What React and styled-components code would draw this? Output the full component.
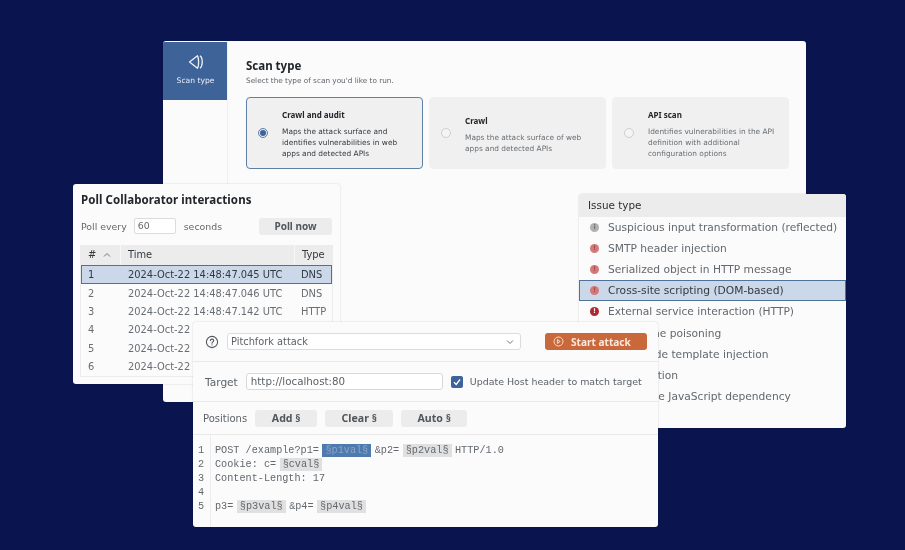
import React from "react";
import styled, { createGlobalStyle } from "styled-components";

const GlobalStyle = createGlobalStyle`
  html, body {
    margin: 0;
    padding: 0;
    background: #0a1550;
  }
  * {
    box-sizing: border-box;
  }
`;

const boldFont = `"Noto Sans", sans-serif`;

const Stage = styled.div`
  position: relative;
  width: 905px;
  height: 550px;
  overflow: hidden;
  background: #0a1550;
  font-family: "DejaVu Sans", sans-serif;
  color: #3c4248;
  filter: blur(0.3px);
`;

const Window = styled.div`
  position: absolute;
  left: ${(p) => p.$left}px;
  top: ${(p) => p.$top}px;
  width: ${(p) => p.$width}px;
  height: ${(p) => p.$height}px;
  background: #fbfbfb;
  border-radius: 3px;
  overflow: hidden;
  box-shadow: 0 0 2px rgba(0, 0, 0, 0.18);
`;

/* scan window */
const ScanWindow = styled(Window)`
  display: flex;
`;

const Sidebar = styled.div`
  width: 65px;
  flex: none;
  padding-top: 1px;
  border-right: 1px solid #f0f0f0;
`;

const SideTab = styled.div`
  height: 58px;
  background: #3d6399;
  color: #e8edf4;
  font-size: 7.6px;
  display: flex;
  flex-direction: column;
  align-items: center;
  padding-top: 12px;
  padding-left: 1px;
  gap: 6px;
`;

const ScanBody = styled.div`
  flex: 1;
  padding: 18px 18px 0 18px;
`;

const ScanTitle = styled.div`
  font-family: ${boldFont};
  font-size: 11.5px;
  font-weight: bold;
  line-height: 14px;
  color: #22262a;
`;

const ScanSub = styled.div`
  font-size: 7.3px;
  line-height: 10px;
  margin-top: 3px;
  color: #5f656b;
`;

const ScanCards = styled.div`
  display: flex;
  gap: 6px;
  margin-top: 11px;
`;

const ScanCard = styled.div`
  width: 177px;
  height: 72px;
  flex: none;
  display: flex;
  align-items: center;
  background: #f0f0f0;
  border-radius: 4px;
  border: ${(p) => (p.$active ? "1.5px solid #5d7fa8" : "1px solid #f0f0f0")};
  padding-left: 11px;
`;

const Radio = styled.span`
  width: 10px;
  height: 10px;
  flex: none;
  border-radius: 50%;
  border: 1px solid ${(p) => (p.$active ? "#5d7fa8" : "#cfcfcf")};
  background: ${(p) => (p.$active ? "#e6ecf4" : "#f4f4f4")};
  margin-right: 14px;
  display: flex;
  align-items: center;
  justify-content: center;
  &::after {
    content: "";
    display: ${(p) => (p.$active ? "block" : "none")};
    width: 6px;
    height: 6px;
    border-radius: 50%;
    background: #3d6399;
  }
`;

const CardCopy = styled.div`
  padding-top: 2px;
`;

const CardTitle = styled.div`
  font-family: ${boldFont};
  font-size: 8px;
  font-weight: bold;
  line-height: 11px;
  color: #22262a;
  margin-bottom: 6px;
`;

const CardText = styled.div`
  font-size: 7.4px;
  line-height: 11px;
  white-space: pre-line;
  color: ${(p) => (p.$active ? "#33383d" : "#686e74")};
`;

/* poll window */
const PollTitle = styled.div`
  font-family: ${boldFont};
  font-size: 11.5px;
  font-weight: bold;
  line-height: 14px;
  letter-spacing: 0.07px;
  color: #22262a;
  padding: 9px 8px 0;
`;

const PollRow = styled.div`
  display: flex;
  align-items: center;
  height: 18px;
  margin: 10px 8px 0;
  font-size: 9.4px;
  color: #62686e;
`;

const SmallInput = styled.div`
  width: 42px;
  height: 16px;
  margin: 0 8px 0 7px;
  padding-left: 3px;
  border: 1px solid #dcdcdc;
  border-radius: 2px;
  background: #fff;
  line-height: 14px;
`;

const PollButton = styled.div`
  margin-left: auto;
  width: 73px;
  height: 17px;
  background: #ececec;
  border-radius: 3px;
  font-family: ${boldFont};
  font-size: 10px;
  font-weight: bold;
  text-align: center;
  line-height: 17px;
  color: #50565c;
`;

const Table = styled.div`
  margin: 10px 7px 0;
  border: 1px solid #ececec;
  border-top: 0;
  font-size: 9.9px;
`;

const TableRow = styled.div`
  display: grid;
  grid-template-columns: 40px 173px 1fr;
  height: ${(p) => (p.$head || p.$sel ? 19.5 : 18.4)}px;
  align-items: center;
  background: ${(p) => (p.$head ? "#ececec" : p.$sel ? "#cbd8ea" : "transparent")};
  outline: ${(p) => (p.$sel ? "1px solid #4f7299" : "none")};
  outline-offset: -1px;
  color: ${(p) => (p.$sel || p.$head ? "#33383d" : "#686e74")};
  & > span {
    padding-left: 7px;
    white-space: nowrap;
  }
`;

const HashCell = styled.span`
  display: flex;
  justify-content: space-between;
  align-items: center;
  padding-right: 9px;
  height: 100%;
  border-right: ${(p) => (p.$head ? "1px solid #f7f7f7" : "0")};
`;

const TypeCell = styled.span`
  height: 100%;
  display: flex;
  align-items: center;
  border-left: ${(p) => (p.$head ? "1px solid #f7f7f7" : "0")};
`;

/* issue window */
const IssueHead = styled.div`
  height: 22.5px;
  padding-left: 9px;
  background: #ececec;
  font-size: 10.4px;
  line-height: 22px;
  color: #2c3035;
`;

const IssueRow = styled.div`
  display: flex;
  align-items: center;
  height: 21.2px;
  font-size: 10.68px;
  white-space: nowrap;
  color: ${(p) => (p.$sel ? "#33383d" : "#62686e")};
  background: ${(p) => (p.$sel ? "#cbd8ea" : "transparent")};
  border: ${(p) => (p.$sel ? "1px solid #4f7299" : "0")};
  padding-left: ${(p) => (p.$sel ? 10 : 11)}px;
  gap: 9px;
`;

const IssueDot = styled.span`
  width: 9px;
  height: 9px;
  flex: none;
  border-radius: 50%;
  background: ${(p) => p.$color};
  color: ${(p) => p.$ink};
  font-size: 6.5px;
  font-weight: bold;
  line-height: 9px;
  text-align: center;
`;

/* attack window */
const AttackRow = styled.div`
  display: flex;
  align-items: center;
  height: ${(p) => p.$height}px;
  padding: 0 11px 0 ${(p) => p.$left ?? 12}px;
  border-bottom: 1px solid #e9e9e9;
  font-size: 9.8px;
  color: #5c6268;
`;

const Select = styled.div`
  width: 294px;
  height: 17px;
  margin-left: 8px;
  padding: 0 6px 0 3px;
  background: #fff;
  border: 1px solid #dcdcdc;
  border-radius: 3px;
  display: flex;
  justify-content: space-between;
  align-items: center;
`;

const StartButton = styled.div`
  margin-left: auto;
  width: 102px;
  height: 17px;
  padding-left: 8px;
  background: #c9693b;
  border-radius: 3px;
  color: #fbe9df;
  font-family: ${boldFont};
  font-size: 10.1px;
  font-weight: bold;
  display: flex;
  align-items: center;
  gap: 7px;
`;

const TargetInput = styled.div`
  width: 197px;
  height: 17px;
  margin-left: 8px;
  padding-left: 4px;
  background: #fff;
  border: 1px solid #d8d8d8;
  border-radius: 3px;
  font-size: 10.3px;
  line-height: 15px;
`;

const TargetLabel = styled.span`
  font-size: 10.6px;
`;

const Check = styled.span`
  width: 12px;
  height: 12px;
  margin: 0 7px 0 8px;
  background: #3d6399;
  border-radius: 2px;
  display: flex;
  align-items: center;
  justify-content: center;
`;

const CheckLabel = styled.span`
  font-size: 9.45px;
  white-space: nowrap;
`;

const PositionsLabel = styled.span`
  font-size: 10px;
`;

const PosButton = styled.div`
  height: 17px;
  width: ${(p) => p.$width}px;
  margin-left: 8px;
  background: #ececec;
  border-radius: 3px;
  font-family: ${boldFont};
  font-size: 10.6px;
  font-weight: bold;
  text-align: center;
  line-height: 17px;
  color: #50565c;
`;

const Editor = styled.div`
  display: flex;
  flex: 1;
  font-family: "Liberation Mono", monospace;
  font-size: 10.2px;
  line-height: 14px;
  color: #62686e;
`;

const Gutter = styled.div`
  width: 18px;
  padding: 9px 0 0 5px;
  border-right: 1px solid #ececec;
  height: 93px;
`;

const Code = styled.div`
  padding: 9px 0 0 4px;
  white-space: pre;
`;

const Token = styled.span`
  background: ${(p) => (p.$sel ? "#4f7aad" : "#e0e0e0")};
  color: ${(p) => (p.$sel ? "#8ba6c8" : "#62686e")};
  padding: 1px 3px;
  margin: 0 3.5px 0 3.5px;
`;

const ScanIcon = () => (
  <svg width="16" height="16" viewBox="0 0 16 16" fill="none" stroke="#eef2f7" strokeWidth="1.3" strokeLinejoin="round">
    <path d="M1.5 8 L9.5 1.8 C11 4 11 12 9.5 14.2 Z" />
    <path d="M12 1.8 C15 4 15 12 12 14.2" />
  </svg>
);

const HelpIcon = () => (
  <svg width="14" height="14" viewBox="0 0 14 14" fill="none" stroke="#50565c" strokeWidth="1.1" strokeLinecap="round">
    <circle cx="7" cy="7" r="5.6" />
    <path d="M5.4 5.6 C5.4 3.6 8.7 3.6 8.7 5.6 C8.7 6.9 7 6.8 7 8.2" />
    <path d="M7 9.9 L7 10" />
  </svg>
);

const Chevron = ({ up }) => (
  <svg width="8" height="6" viewBox="0 0 8 6" fill="none" stroke="#70767c" strokeWidth="1">
    <path d={up ? "M1 4.5 L4 1.5 L7 4.5" : "M1 1.5 L4 4.5 L7 1.5"} />
  </svg>
);

const PlayIcon = () => (
  <svg width="11" height="11" viewBox="0 0 11 11" fill="none" stroke="#fbe9df" strokeWidth="0.9">
    <circle cx="5.5" cy="5.5" r="4.5" />
    <path d="M4.4 3.6 L7.2 5.5 L4.4 7.4 Z" />
  </svg>
);

const scanCards = [
  { title: "Crawl and audit", text: "Maps the attack surface and\nidentifies vulnerabilities in web\napps and detected APIs", active: true },
  { title: "Crawl", text: "Maps the attack surface of web\napps and detected APIs" },
  { title: "API scan", text: "Identifies vulnerabilities in the API\ndefinition with additional\nconfiguration options" },
];

const pollRows = [
  ["1", "2024-Oct-22 14:48:47.045 UTC", "DNS"],
  ["2", "2024-Oct-22 14:48:47.046 UTC", "DNS"],
  ["3", "2024-Oct-22 14:48:47.142 UTC", "HTTP"],
  ["4", "2024-Oct-22 14:48:47.150 UTC", "DNS"],
  ["5", "2024-Oct-22 14:48:47.163 UTC", "DNS"],
  ["6", "2024-Oct-22 14:48:47.171 UTC", "DNS"],
];

const pink = { color: "#d27a7a", ink: "#a8454a", mark: "!" };

const issues = [
  { name: "Suspicious input transformation (reflected)", color: "#b0b0b0", ink: "#6f6f6f", mark: "i" },
  { name: "SMTP header injection", ...pink },
  { name: "Serialized object in HTTP message", ...pink },
  { name: "Cross-site scripting (DOM-based)", ...pink, sel: true },
  { name: "External service interaction (HTTP)", color: "#b3262f", ink: "#fff", mark: "!" },
  { name: "Web cache poisoning", ...pink },
  { name: "Server-side template injection", ...pink },
  { name: "SQL injection", ...pink },
  { name: "Vulnerable JavaScript dependency", ...pink },
];

export default function App() {
  return (
    <Stage>
      <GlobalStyle />
      <ScanWindow $left={163} $top={41} $width={643} $height={361}>
        <Sidebar>
          <SideTab>
            <ScanIcon />
            Scan type
          </SideTab>
        </Sidebar>
        <ScanBody>
          <ScanTitle>Scan type</ScanTitle>
          <ScanSub>Select the type of scan you'd like to run.</ScanSub>
          <ScanCards>
            {scanCards.map((c) => (
              <ScanCard key={c.title} $active={c.active}>
                <Radio $active={c.active} />
                <CardCopy>
                  <CardTitle>{c.title}</CardTitle>
                  <CardText $active={c.active}>{c.text}</CardText>
                </CardCopy>
              </ScanCard>
            ))}
          </ScanCards>
        </ScanBody>
      </ScanWindow>

      <Window $left={579} $top={194} $width={267} $height={234}>
        <IssueHead>Issue type</IssueHead>
        {issues.map((i) => (
          <IssueRow key={i.name} $sel={i.sel}>
            <IssueDot $color={i.color} $ink={i.ink}>{i.mark}</IssueDot>
            {i.name}
          </IssueRow>
        ))}
      </Window>

      <Window $left={73} $top={184} $width={267} $height={200}>
        <PollTitle>Poll Collaborator interactions</PollTitle>
        <PollRow>
          Poll every
          <SmallInput>60</SmallInput>
          seconds
          <PollButton>Poll now</PollButton>
        </PollRow>
        <Table>
          <TableRow $head>
            <HashCell $head>
              #<Chevron up />
            </HashCell>
            <span>Time</span>
            <TypeCell $head>Type</TypeCell>
          </TableRow>
          {pollRows.map((r) => (
            <TableRow key={r[0]} $sel={r[0] === "1"}>
              <HashCell>{r[0]}</HashCell>
              <span>{r[1]}</span>
              <TypeCell>{r[2]}</TypeCell>
            </TableRow>
          ))}
        </Table>
      </Window>

      <Window $left={193} $top={322} $width={465} $height={205}>
        <AttackRow $height={40}>
          <HelpIcon />
          <Select>
            Pitchfork attack
            <Chevron />
          </Select>
          <StartButton>
            <PlayIcon />
            Start attack
          </StartButton>
        </AttackRow>
        <AttackRow $height={40}>
          <TargetLabel>Target</TargetLabel>
          <TargetInput>http://localhost:80</TargetInput>
          <Check>
            <svg width="8" height="8" viewBox="0 0 8 8" fill="none" stroke="#fff" strokeWidth="1.3">
              <path d="M1 4.2 L3.2 6.4 L7 1.5" />
            </svg>
          </Check>
          <CheckLabel>Update Host header to match target</CheckLabel>
        </AttackRow>
        <AttackRow $height={33} $left={10}>
          <PositionsLabel>Positions</PositionsLabel>
          <PosButton $width={62}>Add §</PosButton>
          <PosButton $width={68}>Clear §</PosButton>
          <PosButton $width={66}>Auto §</PosButton>
        </AttackRow>
        <Editor>
          <Gutter>
            1<br />2<br />3<br />4<br />5
          </Gutter>
          <Code>
            POST /example?p1=<Token $sel>§p1val§</Token>&amp;p2=<Token>§p2val§</Token>HTTP/1.0
            {"\n"}Cookie: c=<Token>§cval§</Token>
            {"\n"}Content-Length: 17
            {"\n"}
            {"\n"}p3=<Token>§p3val§</Token>&amp;p4=<Token>§p4val§</Token>
          </Code>
        </Editor>
      </Window>
    </Stage>
  );
}
